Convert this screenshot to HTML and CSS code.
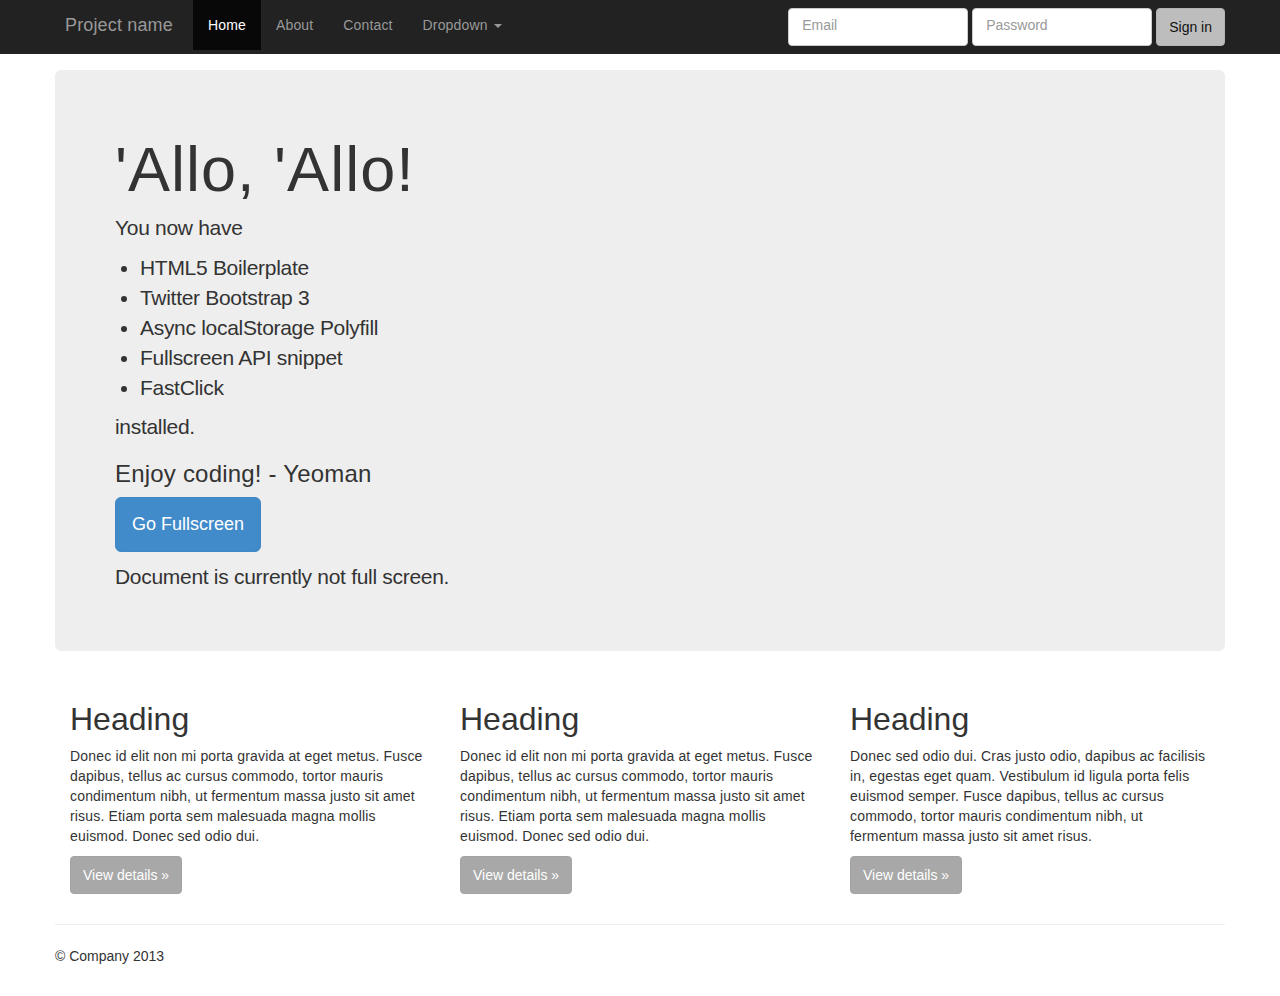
FILE: index.html
```html
<!DOCTYPE html>
<html lang="en">
<head>
<meta charset="utf-8">
<title>Project name</title>
<link rel="stylesheet" href="styles.css">
</head>
<body>
<div class="navbar">
  <div class="container nav-inner">
    <div class="nav-left">
      <a class="brand" href="#">Project name</a>
      <ul class="nav">
        <li class="active"><a href="#">Home</a></li>
        <li><a href="#">About</a></li>
        <li><a href="#">Contact</a></li>
        <li><a href="#">Dropdown <b class="caret"></b></a></li>
      </ul>
    </div>
    <form class="nav-form">
      <input type="text" class="form-control" placeholder="Email">
      <input type="password" class="form-control" placeholder="Password">
      <button type="button" class="btn-signin">Sign in</button>
    </form>
  </div>
</div>

<div class="container">
  <div class="jumbotron">
    <h1>'Allo, 'Allo!</h1>
    <p>You now have</p>
    <ul class="features">
      <li>HTML5 Boilerplate</li>
      <li>Twitter Bootstrap 3</li>
      <li>Async localStorage Polyfill</li>
      <li>Fullscreen API snippet</li>
      <li>FastClick</li>
    </ul>
    <p>installed.</p>
    <h3>Enjoy coding! - Yeoman</h3>
    <p class="cta"><a class="btn-lg" href="#">Go Fullscreen</a></p>
    <p class="last">Document is currently not full screen.</p>
  </div>

  <div class="row">
    <div class="col">
      <h2>Heading</h2>
      <p>Donec id elit non mi porta gravida at eget metus. Fusce dapibus, tellus ac cursus commodo, tortor mauris condimentum nibh, ut fermentum massa justo sit amet risus. Etiam porta sem malesuada magna mollis euismod. Donec sed odio dui.</p>
      <p class="btn-wrap"><a class="btn-details" href="#">View details &raquo;</a></p>
    </div>
    <div class="col">
      <h2>Heading</h2>
      <p>Donec id elit non mi porta gravida at eget metus. Fusce dapibus, tellus ac cursus commodo, tortor mauris condimentum nibh, ut fermentum massa justo sit amet risus. Etiam porta sem malesuada magna mollis euismod. Donec sed odio dui.</p>
      <p class="btn-wrap"><a class="btn-details" href="#">View details &raquo;</a></p>
    </div>
    <div class="col">
      <h2>Heading</h2>
      <p>Donec sed odio dui. Cras justo odio, dapibus ac facilisis in, egestas eget quam. Vestibulum id ligula porta felis euismod semper. Fusce dapibus, tellus ac cursus commodo, tortor mauris condimentum nibh, ut fermentum massa justo sit amet risus.</p>
      <p class="btn-wrap"><a class="btn-details" href="#">View details &raquo;</a></p>
    </div>
  </div>

  <hr class="divider">
  <footer class="footer">
    <p>&copy; Company 2013</p>
  </footer>
</div>
</body>
</html>
```

FILE: styles.css
```css
* { box-sizing: border-box; }

body {
  margin: 0;
  font-family: "Liberation Sans", Arial, Helvetica, sans-serif;
  font-size: 14px;
  line-height: 20px;
  color: #333;
  background: #fff;
}

a { text-decoration: none; }

.container {
  width: 1170px;
  margin: 0 auto;
}

/* Navbar */
.navbar {
  background: #222;
  height: 54px;
}

.nav-inner {
  display: flex;
  justify-content: space-between;
  align-items: flex-start;
}

.nav-left {
  display: flex;
  align-items: flex-start;
  padding-left: 10px;
}

.brand {
  display: block;
  width: 128px;
  padding: 15px 0;
  font-size: 18px;
  line-height: 20px;
  letter-spacing: 0.15px;
  color: #999;
}

.nav {
  display: flex;
  list-style: none;
  margin: 0;
  padding: 0;
}

.nav li a {
  display: block;
  padding: 15px;
  line-height: 20px;
  letter-spacing: 0.15px;
  color: #999;
}

.nav li.active a {
  background: #080808;
  color: #fff;
}

.caret {
  display: inline-block;
  width: 0;
  height: 0;
  margin-left: 2px;
  vertical-align: middle;
  border-top: 4px solid #999;
  border-left: 4px solid transparent;
  border-right: 4px solid transparent;
}

.nav-form {
  display: flex;
  gap: 4px;
  margin: 8px 0;
}

.form-control {
  width: 180px;
  height: 38px;
  padding: 4px 13px 8px;
  font-family: inherit;
  font-size: 14px;
  color: #555;
  background: #fff;
  border: 1px solid #ccc;
  border-radius: 4px;
  outline: none;
}

.form-control::placeholder { color: #999; }

.btn-signin {
  height: 38px;
  padding: 6px 12px;
  font-family: inherit;
  font-size: 14px;
  line-height: 20px;
  color: #111;
  background: #bdbdbd;
  border: 1px solid #b4b4b4;
  border-radius: 4px;
}

/* Jumbotron */
.jumbotron {
  margin-top: 16px;
  margin-bottom: 30px;
  padding: 48px 60px 49px;
  background: #eee;
  border-radius: 6px;
  font-size: 21px;
  line-height: 30px;
  letter-spacing: -0.3px;
}

.jumbotron h1 {
  margin: 17px 0 9px;
  font-size: 63px;
  line-height: 69px;
  font-weight: normal;
  letter-spacing: 1px;
  color: #333;
}

.jumbotron p {
  margin: 0 0 10px;
}

.features {
  margin: 0 0 9px;
  padding-left: 25px;
}

.jumbotron h3 {
  margin: 19px 0 10px;
  font-size: 24px;
  line-height: 26px;
  font-weight: normal;
  letter-spacing: 0.2px;
}

.jumbotron .cta {
  display: flex;
  margin-bottom: 10px;
}

.btn-lg {
  display: block;
  padding: 14px 16px;
  font-size: 18px;
  line-height: 25px;
  letter-spacing: 0;
  color: #fff;
  background: #428bca;
  border: 1px solid #3f87c6;
  border-radius: 6px;
}

/* Marketing row */
.row {
  display: grid;
  grid-template-columns: repeat(3, 1fr);
}

.col {
  padding: 0 15px;
}

.col h2 {
  margin: 21px 0 9px;
  font-size: 32px;
  line-height: 35px;
  font-weight: normal;
}

.col p {
  margin: 0 0 10px;
  letter-spacing: 0.17px;
}

.btn-wrap { display: flex; }

.btn-details {
  display: block;
  padding: 8px 12px;
  font-size: 14px;
  line-height: 20px;
  letter-spacing: 0;
  color: #fff;
  background: #a8a8a8;
  border: 1px solid #a3a3a3;
  border-radius: 4px;
}

.divider {
  margin: 20px 0 21px;
  border: 0;
  border-top: 1px solid #eee;
}

.footer p {
  margin: 0 0 10px;
}
```
